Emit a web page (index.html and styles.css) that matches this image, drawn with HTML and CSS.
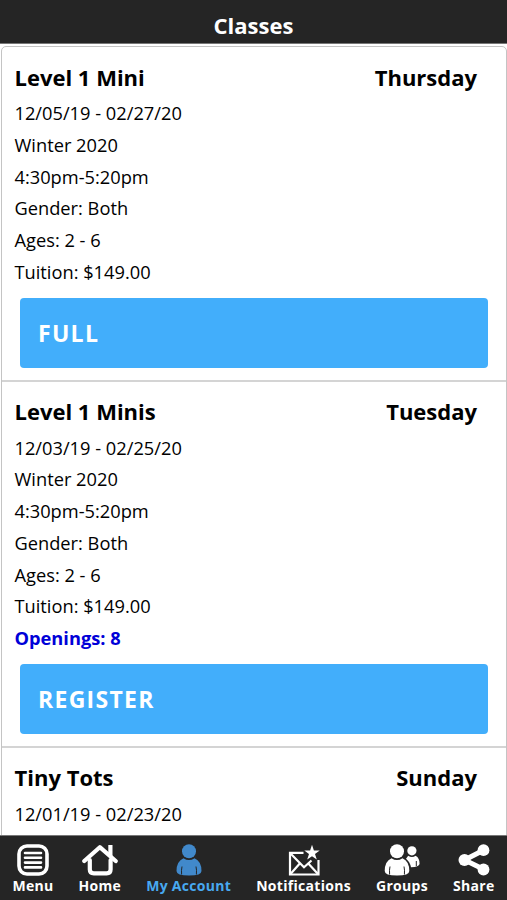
FILE: index.html
```
<!doctype html>
<html lang="en">
<head>
<meta charset="utf-8">
<title>Classes</title>
<link rel="stylesheet" href="styles.css">
</head>
<body>
<header><h1>Classes</h1></header>

<main>
    <ul id="classes">
        <li>
            <div class="heading"><h2>Level 1 Mini</h2><span>Thursday</span></div>
            <p>12/05/19 - 02/27/20</p>
            <p>Winter 2020</p>
            <p>4:30pm-5:20pm</p>
            <p>Gender: Both</p>
            <p>Ages: 2 - 6</p>
            <p>Tuition: $149.00</p>
            <button>FULL</button>
        </li>
        <li>
            <div class="heading"><h2>Level 1 Minis</h2><span>Tuesday</span></div>
            <p>12/03/19 - 02/25/20</p>
            <p>Winter 2020</p>
            <p>4:30pm-5:20pm</p>
            <p>Gender: Both</p>
            <p>Ages: 2 - 6</p>
            <p>Tuition: $149.00</p>
            <p class="openings">Openings: 8</p>
            <button>REGISTER</button>
        </li>
        <li>
            <div class="heading"><h2>Tiny Tots</h2><span>Sunday</span></div>
            <p>12/01/19 - 02/23/20</p>
        </li>
    </ul>
</main>

<nav>
    <a>
        <svg width="32" height="32" viewBox="0 0 32 32" fill="none" stroke="currentColor">
            <rect x="2" y="2" width="28" height="28" rx="8" stroke-width="3.6"/>
            <path d="M8 9h16M8 13.8h16M8 18.6h16M8 23.4h16" stroke-width="2.6" stroke-linecap="round"/>
        </svg>
        <span>Menu</span>
    </a>
    <a>
        <svg width="36" height="32" viewBox="0 0 36 32" fill="none" stroke="currentColor" stroke-width="4.2" stroke-linecap="round" stroke-linejoin="round">
            <path d="M2.3 17L17.8 3.2L33.7 17"/>
            <path d="M7.8 16V25.5q0 3.8 4 3.8H24.6q4 0 4-3.8V16"/>
            <path d="M28.4 1v11" stroke-linecap="butt"/>
        </svg>
        <span>Home</span>
    </a>
    <a class="current">
        <svg width="26" height="32" viewBox="0 0 26 32" fill="currentColor">
            <circle cx="13" cy="7.2" r="7"/>
            <path d="M7.5 14.2Q13 18 18.5 14.2Q25.5 17.2 25.5 27Q25.5 31.5 13 31.5T.5 27Q.5 17.2 7.5 14.2z"/>
            <path class="arms" d="M6 22.5q-.8 3.5-.4 8M20 22.5q.8 3.5.4 8"/>
        </svg>
        <span>My Account</span>
    </a>
    <a>
        <svg width="32" height="32" viewBox="0 0 32 32" fill="none" stroke="currentColor" stroke-width="2.2">
            <path d="M15.5 8.8H2V30.5H30.5V16"/>
            <path d="M2.5 9.5L16 23.2L23.5 16.5M2.5 30L11.8 19.5M30 30L20.3 19.5"/>
            <path d="M24 .8L25.9 6.5H31.7L27 10L28.8 15.6L24 12.2L19.2 15.6L21 10L16.3 6.5H22.1z" fill="currentColor" stroke="none"/>
        </svg>
        <span>Notifications</span>
    </a>
    <a>
        <svg width="36" height="32" viewBox="0 0 36 32" fill="currentColor">
            <circle cx="27.9" cy="6.8" r="4.6"/>
            <path d="M24.2 11.8Q28 14.3 31.6 11.8Q35.7 14 35.6 20Q35 23 27 23.2Q25.8 17.8 22 14.8z"/>
            <path class="arms" d="M32.3 17v5"/>
            <circle cx="13" cy="7.2" r="7"/>
            <path d="M7.5 14.2Q13 18 18.5 14.2Q25.3 17.2 25.3 27Q25.3 31.5 13 31.5T.7 27Q.7 17.2 7.5 14.2z"/>
            <path class="arms" d="M6 22.5q-.8 3.5-.4 8M20 22.5q.8 3.5.4 8"/>
        </svg>
        <span>Groups</span>
    </a>
    <a>
        <svg width="32" height="32" viewBox="0 0 32 32" fill="currentColor">
            <path d="M25.5 6.2L6.5 16L25.5 25.3" fill="none" stroke="currentColor" stroke-width="5"/>
            <circle cx="25.5" cy="6.2" r="5.9"/>
            <circle cx="6.5" cy="16" r="6"/>
            <circle cx="25.5" cy="25.5" r="5.9"/>
        </svg>
        <span>Share</span>
    </a>
</nav>
</body>
</html>
```
FILE: styles.css
```
* { box-sizing: border-box; }
body {
    margin: 0;
    height: 900px;
    display: flex;
    flex-direction: column;
    overflow: hidden;
    background: white;
    color: black;
    font-family: "Open Sans", sans-serif;
}
h1, h2, p, ul { margin: 0; padding: 0; }
header {
    flex: none;
    height: 44px;
    padding-top: 8px;
    background: #252525;
    color: white;
    text-align: center;
    border-bottom: 1px solid #777;
}
h1 { font-size: 22px; line-height: 34px; }
main {
    flex: 1;
    min-height: 0;
    overflow: hidden;
    padding: 2px 0 0 1px;
}
#classes {
    list-style: none;
    border: 1px solid #c4c4c4;
    border-radius: 5px;
}
#classes li {
    padding: 9.5px 18px 12px 12.5px;
    border-bottom: 2px solid #d4d4d4;
}
.heading {
    display: flex;
    justify-content: space-between;
    padding-right: 11px;
    height: 40.5px;
    font-size: 22px;
    font-weight: bold;
    line-height: 41px;
}
h2 { font-size: 22px; }
#classes p {
    font-size: 18.25px;
    line-height: 31.75px;
}
#classes .openings {
    color: #0000d8;
    font-weight: bold;
}
button {
    display: block;
    width: 468px;
    height: 69.5px;
    margin: 10.5px 0 0 5.5px;
    padding: 0 18px;
    border: 0;
    border-radius: 4px;
    background: #42aefb;
    color: white;
    font: bold 23px "Open Sans", sans-serif;
    letter-spacing: 1.3px;
    text-align: left;
}
nav {
    flex: none;
    height: 65px;
    padding-top: 8px;
    display: flex;
    justify-content: center;
    gap: 25px;
    background: #252525;
    border-top: 1px solid #777;
    color: white;
}
nav a {
    display: flex;
    flex-direction: column;
    align-items: center;
    font-size: 14px;
    font-weight: bold;
    line-height: 20px;
    letter-spacing: .3px;
}
nav .current { color: #48a9f0; }
nav .current svg { color: #4189cb; }
.arms {
    fill: none;
    stroke: #252525;
    stroke-width: 1;
}
```
